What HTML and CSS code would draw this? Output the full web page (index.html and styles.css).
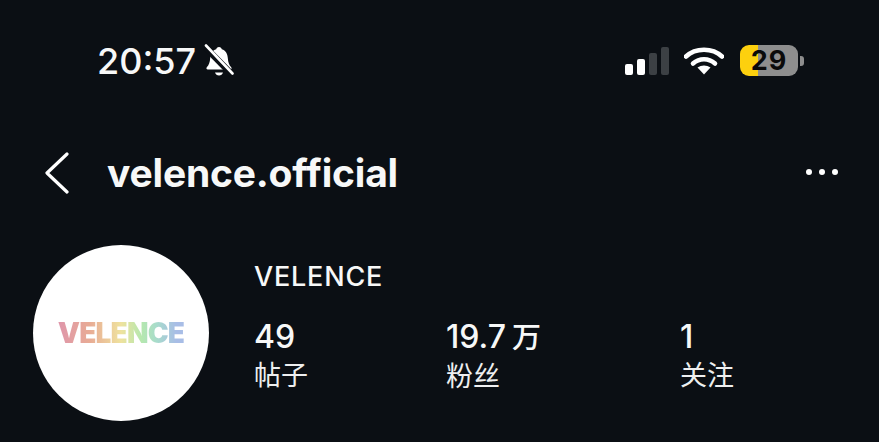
FILE: index.html
```html
<!DOCTYPE html>
<html lang="en">

<head>
    <meta charset="UTF-8">
    <meta name="viewport" content="width=device-width, initial-scale=1.0">
    <title>velence.official</title>
    <link rel="stylesheet" href="styles.css">
</head>

<body>
    <div class="status-bar">
        <div class="status-left">
            <span class="time">20:57</span>
            <svg class="bell" width="32" height="34" viewBox="0 0 32 34">
                <path d="M16 3c-1.600 0-2.600 1-2.800 2.300C9.200 6.400 7.500 9.800 7.200 14c-.3 4.200-1.200 7-3.400 9.200-.8.900-.3 2.300 1 2.300h22.400c1.300 0 1.800-1.400 1-2.300-2.200-2.200-3.100-5-3.400-9.200-.3-4.200-2-7.600-6-8.700C18.600 4 17.600 3 16 3z" fill="#fff" />
                <path d="M12 28.500c.6 2 2.100 3 4 3s3.400-1 4-3z" fill="#fff" />
                <path d="M2.500 3.500 29 30.500" stroke="#0b0f14" stroke-width="6.500" />
                <path d="M3 1.500 29.500 29.500" stroke="#fff" stroke-width="2.600" stroke-linecap="round" />
            </svg>
        </div>
        <div class="status-right">
            <div class="signal">
                <span class="bar bar-1"></span>
                <span class="bar bar-2"></span>
                <span class="bar bar-3"></span>
                <span class="bar bar-4"></span>
            </div>
            <svg class="wifi" width="40" height="28" viewBox="0 0 40 28">
                <path d="M2 9.500C11.500 .5 28.500 .5 38 9.500" fill="none" stroke="#fff" stroke-width="4.600" stroke-linecap="round" />
                <path d="M9 16.500c6.500-5.600 15.500-5.600 22 0" fill="none" stroke="#fff" stroke-width="4.600" stroke-linecap="round" />
                <path d="M13.500 20.500c3.800-2.800 9.200-2.800 13 0L20 27.500z" fill="#fff" />
            </svg>
            <div class="battery">
                <div class="battery-body"><span class="battery-num">29</span></div>
                <span class="battery-tip"></span>
            </div>
        </div>
    </div>

    <div class="header">
        <svg class="back" width="26" height="42" viewBox="0 0 26 42">
            <path d="M23 2 3 21l20 19" fill="none" stroke="#fff" stroke-width="3.200" stroke-linecap="round" stroke-linejoin="round" />
        </svg>
        <h1 class="username">velence.official</h1>
        <div class="more">
            <span class="dot"></span>
            <span class="dot"></span>
            <span class="dot"></span>
        </div>
    </div>

    <div class="profile">
        <div class="avatar"><span class="logo">VELENCE</span></div>
        <div class="info">
            <div class="display-name">VELENCE</div>
            <div class="stats">
                <div class="stat stat-posts">
                    <div class="num">49</div>
                    <div class="label">帖子</div>
                </div>
                <div class="stat stat-fans">
                    <div class="num">19.7<span class="unit">万</span></div>
                    <div class="label">粉丝</div>
                </div>
                <div class="stat">
                    <div class="num">1</div>
                    <div class="label">关注</div>
                </div>
            </div>
        </div>
    </div>
</body>

</html>
```

FILE: styles.css
```css
html,
body {
    height: 100%;
}

body {
    margin: 0;
    overflow: hidden;
    background-color: #0b0f14;
    color: #f7f8f8;
    font-family: Inter, "Noto Sans CJK SC", sans-serif;
}

.status-bar {
    display: flex;
    justify-content: space-between;
    align-items: center;
    height: 42px;
    padding: 40px 75px 0 97px;
}

.status-left,
.status-right {
    display: flex;
    align-items: center;
}

.time {
    font-size: 36px;
    font-weight: 500;
    line-height: 42px;
}

.bell {
    margin-left: 7px;
}

.signal {
    display: flex;
    align-items: flex-end;
    gap: 4px;
    height: 28px;
}

.bar {
    width: 8px;
    border-radius: 2px;
    background-color: #fff;
}

.bar-1 {
    height: 11px;
}

.bar-2 {
    height: 16px;
}

.bar-3 {
    height: 22px;
    background-color: #3c4044;
}

.bar-4 {
    height: 28px;
    background-color: #3c4044;
}

.wifi {
    margin-left: 15px;
}

.battery {
    display: flex;
    align-items: center;
    margin-left: 16px;
}

.battery-body {
    display: flex;
    justify-content: center;
    align-items: center;
    width: 58px;
    height: 31px;
    margin-top: -2px;
    border-radius: 9px;
    background: linear-gradient(90deg, #fdd00e 0, #fdd00e 31%, #8e8e8e 31%);
}

.battery-num {
    color: #0a0a0a;
    font-size: 27px;
    font-weight: 700;
    letter-spacing: 1px;
}

.battery-tip {
    width: 4px;
    height: 10px;
    margin-left: 2px;
    border-radius: 0 3px 3px 0;
    background-color: #8e8e8e;
}

.header {
    display: flex;
    align-items: center;
    height: 50px;
    margin-top: 65px;
    padding: 0 41px 0 44px;
}

.back {
    margin-top: 2px;
}

.username {
    flex: 1;
    margin: 0 0 0 37px;
    font-size: 39px;
    font-weight: 700;
    letter-spacing: -0.2px;
}

.more {
    display: flex;
    gap: 7px;
}

.dot {
    width: 6px;
    height: 6px;
    border-radius: 50%;
    background-color: #fff;
}

.profile {
    display: flex;
    margin-top: 48px;
    padding-left: 33px;
}

.avatar {
    display: flex;
    justify-content: center;
    align-items: center;
    width: 176px;
    height: 176px;
    border-radius: 50%;
    background-color: #fff;
}

.logo {
    background: linear-gradient(90deg, #df96ab 0, #e8ab95 25%, #efe29e 50%, #b6e8ae 66%, #a8dccb 78%, #a8bde6 94%);
    -webkit-background-clip: text;
    background-clip: text;
    color: transparent;
    font-size: 28px;
    font-weight: 900;
    letter-spacing: -0.8px;
}

.info {
    margin-left: 45px;
    padding-top: 16px;
}

.display-name {
    font-size: 27px;
    font-weight: 500;
    line-height: 32px;
    letter-spacing: 0.8px;
}

.stats {
    display: flex;
    margin-top: 27px;
}

.stat-posts {
    width: 192px;
}

.stat-fans {
    width: 234px;
}

.num {
    font-size: 32px;
    font-weight: 500;
    line-height: 34px;
}

.unit {
    margin-left: 6px;
    font-size: 29px;
}

.label {
    margin-top: 4px;
    color: #eeeff0;
    font-size: 27px;
    line-height: 36px;
}
```
